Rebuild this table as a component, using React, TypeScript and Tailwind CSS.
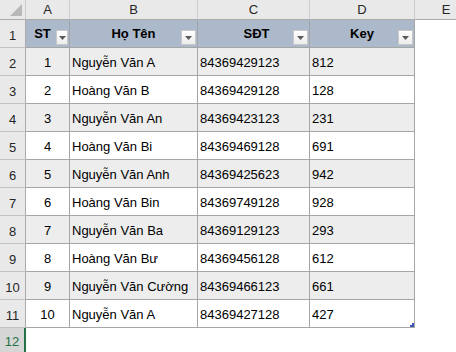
import React from 'react';

const rows = [
  { st: '1', name: 'Nguyễn Văn A', phone: '84369429123', key: '812' },
  { st: '2', name: 'Hoàng Văn B', phone: '84369429128', key: '128' },
  { st: '3', name: 'Nguyễn Văn An', phone: '84369423123', key: '231' },
  { st: '4', name: 'Hoàng Văn Bi', phone: '84369469128', key: '691' },
  { st: '5', name: 'Nguyễn Văn Anh', phone: '84369425623', key: '942' },
  { st: '6', name: 'Hoàng Văn Bin', phone: '84369749128', key: '928' },
  { st: '7', name: 'Nguyễn Văn Ba', phone: '84369129123', key: '293' },
  { st: '8', name: 'Hoàng Văn Bư', phone: '84369456128', key: '612' },
  { st: '9', name: 'Nguyễn Văn Cường', phone: '84369466123', key: '661' },
  { st: '10', name: 'Nguyễn Văn A', phone: '84369427128', key: '427' },
];

function FilterButton({ narrow }: { narrow?: boolean }) {
  return (
    <div
      className={`absolute right-[1px] bottom-[2px] h-[15px] ${narrow ? 'w-[12px]' : 'w-[15px]'} border border-[#c8c8c8] bg-gradient-to-b from-white to-[#ececec] flex items-center justify-center`}
    >
      <svg width="7" height="4" viewBox="0 0 7 4">
        <path d="M0 0 H7 L3.5 4 Z" fill="#5a5a5a" />
      </svg>
    </div>
  );
}

function ColHead({ label, last }: { label: string; last?: boolean }) {
  return (
    <div
      className={`flex items-center justify-center pt-[1px] bg-[#e9e9e9] border-b border-[#ababab] ${last ? '' : 'border-r border-r-[#cdcdcd]'} text-[#262626]`}
    >
      {label}
    </div>
  );
}

function RowHead({ n }: { n: number }) {
  return (
    <div className="flex items-end justify-center pb-[2px] bg-[#e9e9e9] border-r border-b border-r-[#ababab] border-b-[#c3c3c3] text-[#262626]">
      {n}
    </div>
  );
}

export default function App() {
  return (
    <div
      className="w-[456px] h-[352px] overflow-hidden bg-white text-[13px] text-black relative"
      style={{ fontFamily: '"Liberation Sans", Arial, sans-serif' }}
    >
      <div className="grid grid-cols-[26px_44px_128px_112px_105px_62px] grid-rows-[20px_repeat(11,28px)_24px]">
        {/* column header row */}
        <div className="bg-[#e9e9e9] border-r border-b border-r-[#cdcdcd] border-b-[#ababab] flex items-end justify-end pr-[3px] pb-[3px]">
          <svg width="12" height="12" viewBox="0 0 12 12">
            <path d="M12 0 V12 H0 Z" fill="#b8b8b8" />
          </svg>
        </div>
        <ColHead label="A" />
        <ColHead label="B" />
        <ColHead label="C" />
        <ColHead label="D" />
        <ColHead label="E" last />

        {/* table header row */}
        <RowHead n={1} />
        <div className="relative flex items-center justify-center pr-[10px] pt-[1px] bg-[#acb9ca] border-r border-b border-[#a6a6a6] font-bold">
          ST
          <FilterButton narrow />
        </div>
        <div className="relative flex items-center justify-center pt-[1px] bg-[#acb9ca] border-r border-b border-[#a6a6a6] font-bold">
          Họ Tên
          <FilterButton />
        </div>
        <div className="relative flex items-center justify-center pl-[6px] pt-[1px] bg-[#acb9ca] border-r border-b border-[#a6a6a6] font-bold">
          SĐT
          <FilterButton />
        </div>
        <div className="relative flex items-center justify-center pt-[1px] bg-[#acb9ca] border-r border-b border-[#a6a6a6] font-bold">
          Key
          <FilterButton />
        </div>
        <div className="bg-white" />

        {rows.map((r, i) => {
          const bg = i % 2 === 0 ? 'bg-[#ededed]' : 'bg-white';
          return (
            <React.Fragment key={i}>
              <RowHead n={i + 2} />
              <div className={`${bg} flex items-center justify-center pt-[3px] border-r border-b border-[#a6a6a6]`}>{r.st}</div>
              <div className={`${bg} flex items-center pl-[2px] pt-[3px] border-r border-b border-[#a6a6a6] whitespace-nowrap`}>{r.name}</div>
              <div className={`${bg} flex items-center pl-[2px] pt-[3px] border-r border-b border-[#a6a6a6]`}>{r.phone}</div>
              <div className={`${bg} flex items-center pl-[2px] pt-[3px] border-r border-b border-[#a6a6a6]`}>{r.key}</div>
              <div className="bg-white" />
            </React.Fragment>
          );
        })}

        {/* row 12 (selected) */}
        <div className="flex items-end justify-center pb-[1px] bg-[#d6d6d6] border-r-2 border-[#217346] text-[#217346]">12</div>
        <div className="bg-white" />
        <div className="bg-white" />
        <div className="bg-white" />
        <div className="bg-white" />
        <div className="bg-white" />
      </div>

      {/* table resize handle */}
      <div className="absolute left-[410px] top-[323px] w-[4px] h-[4px] flex flex-col items-end">
        <div className="w-[2px] h-[2px] bg-[#3e54b8]" />
        <div className="w-[4px] h-[2px] bg-[#3e54b8]" />
      </div>
    </div>
  );
}
